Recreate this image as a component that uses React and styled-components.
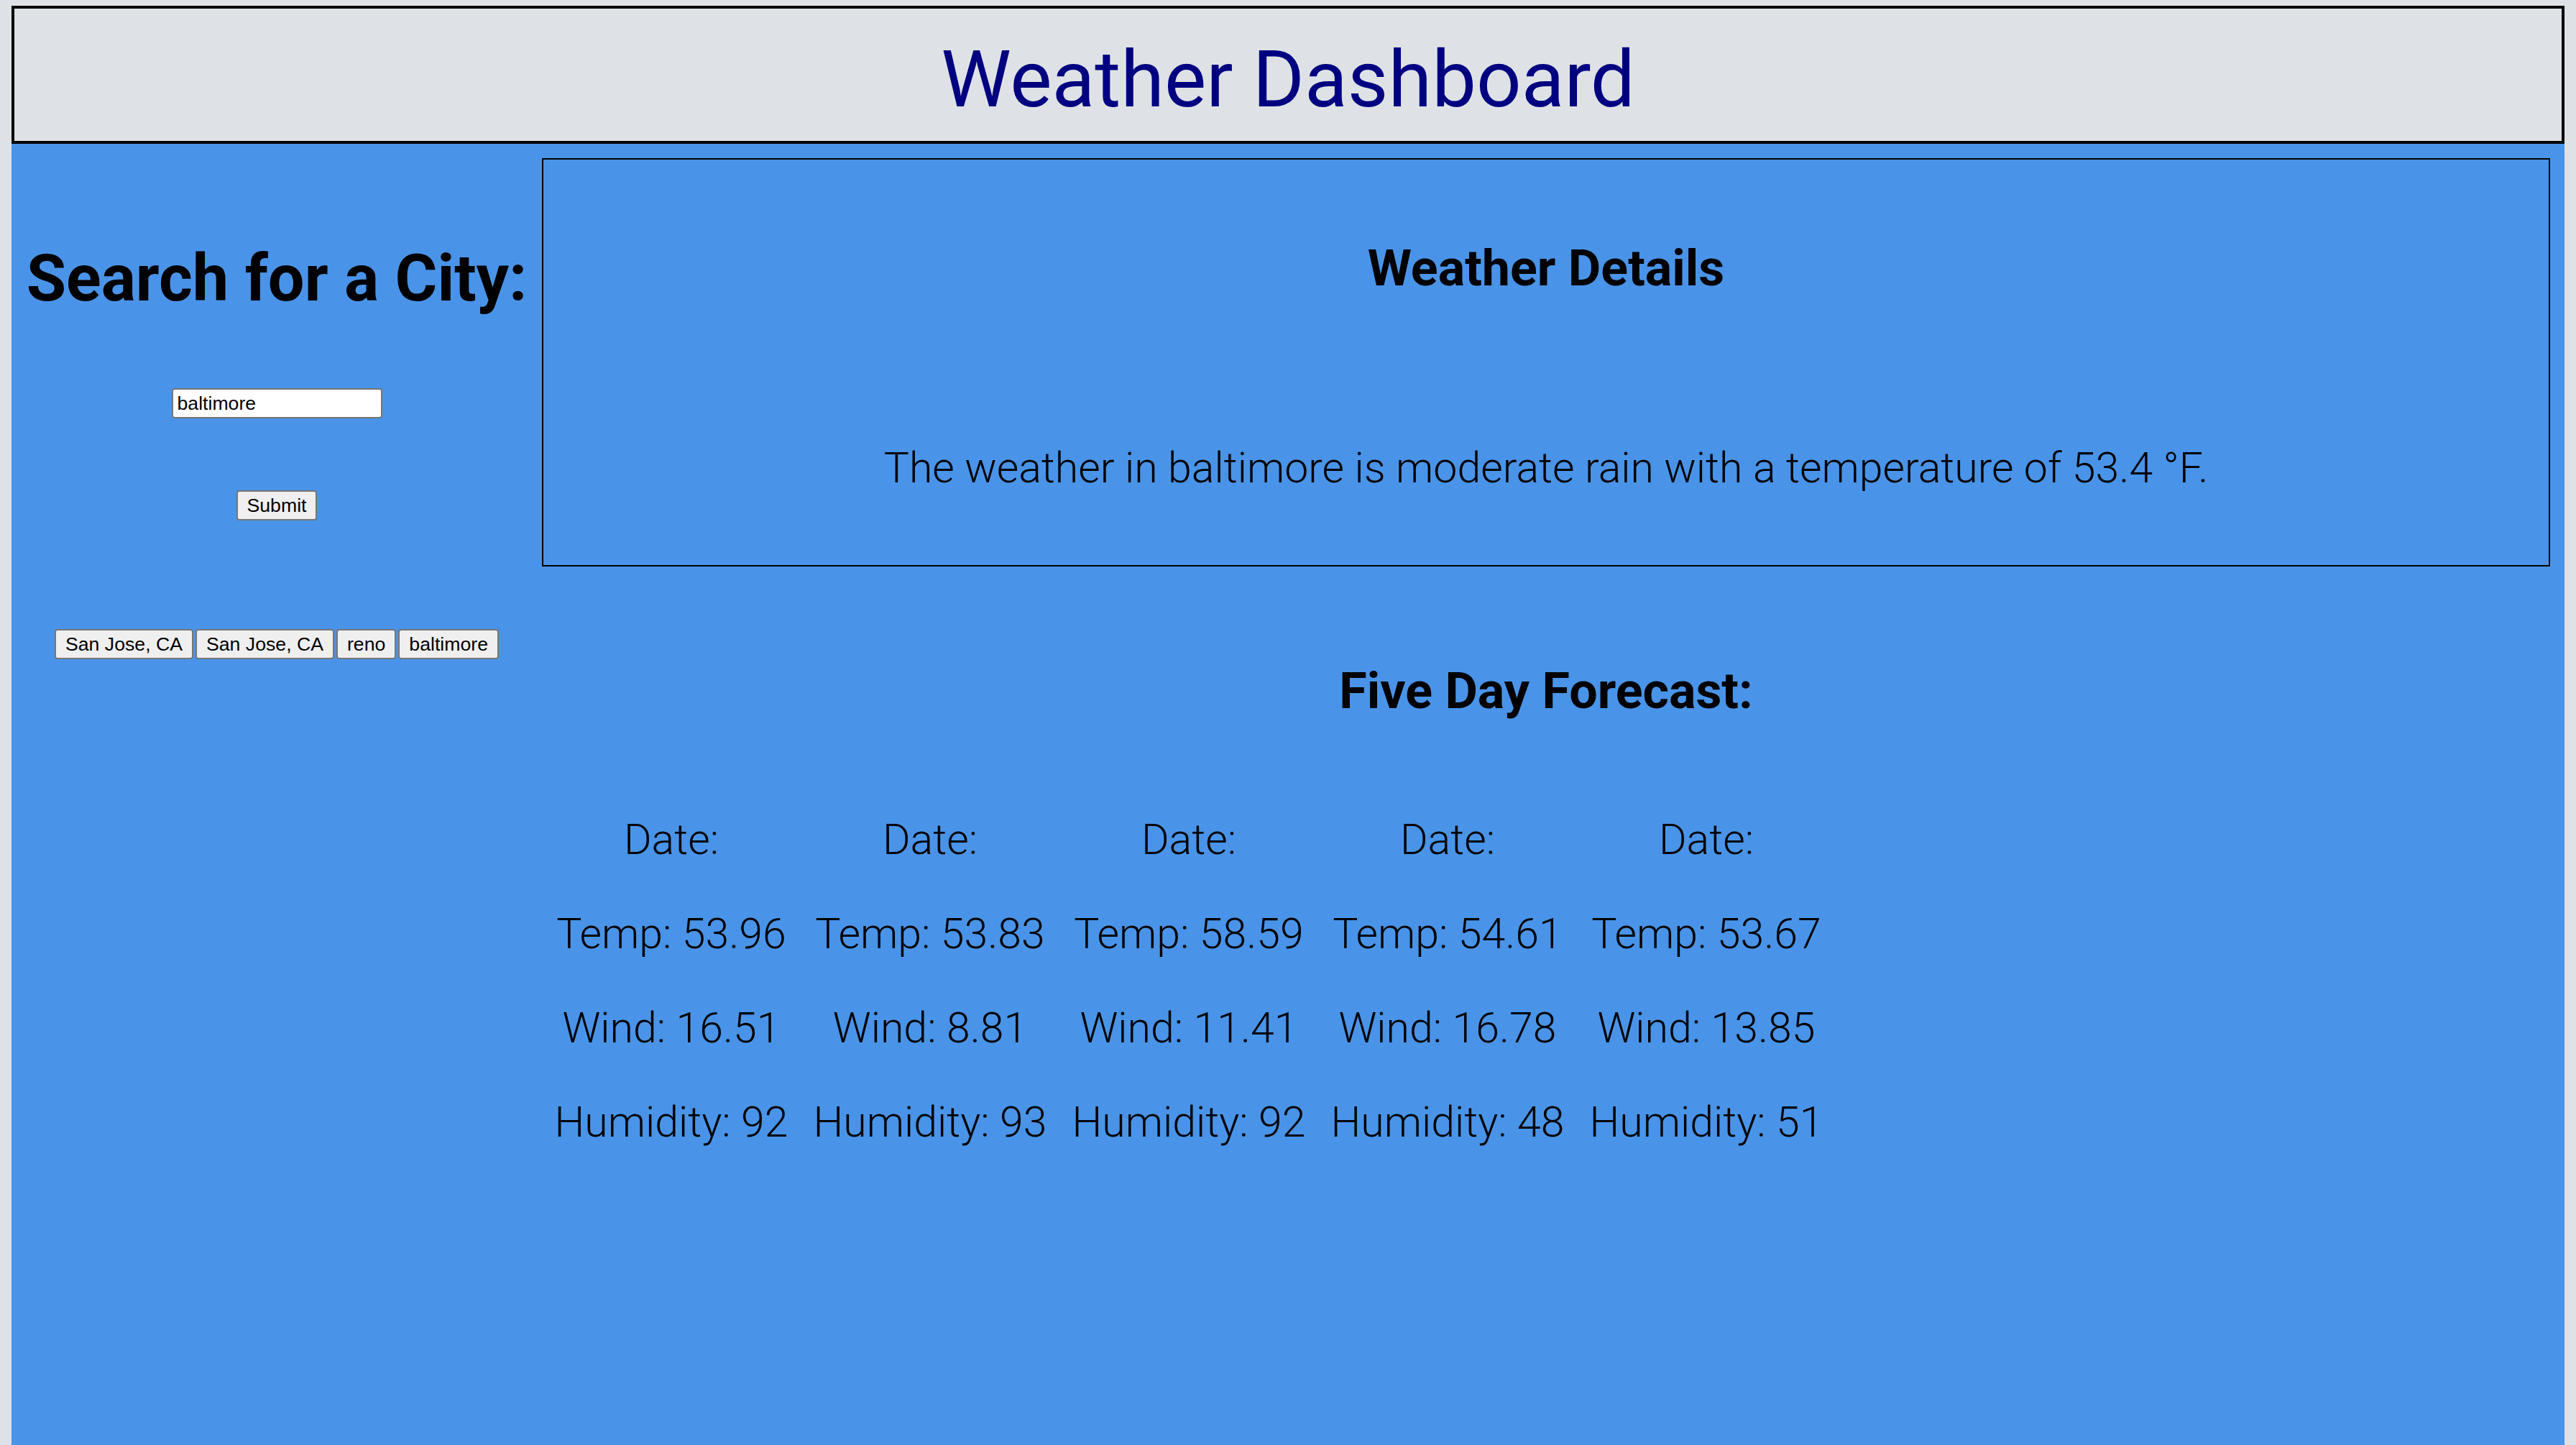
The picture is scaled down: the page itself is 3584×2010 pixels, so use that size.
import styled, { createGlobalStyle } from 'styled-components'

const GlobalStyle = createGlobalStyle`
  html, body {
    margin: 0;
    padding: 0;
  }
  body {
    background-color: #dee2e6;
    padding: 8px 16px 0;
    font-family: 'Roboto', 'Liberation Sans', sans-serif;
  }
`

const history = ['San Jose, CA', 'San Jose, CA', 'reno', 'baltimore']

const forecast = [
  { temp: '53.96', wind: '16.51', humidity: 92 },
  { temp: '53.83', wind: '8.81', humidity: 93 },
  { temp: '58.59', wind: '11.41', humidity: 92 },
  { temp: '54.61', wind: '16.78', humidity: 48 },
  { temp: '53.67', wind: '13.85', humidity: 51 },
]

export default function App() {
  return (
    <>
      <GlobalStyle />
      <Header>
        <Title>Weather Dashboard</Title>
      </Header>

      <Main>
        <Aside>
          <SearchTitle>Search for a City:</SearchTitle>
          <CityInput defaultValue="baltimore" />
          <SubmitButton>Submit</SubmitButton>
          <History>
            {history.map((city, i) => (
              <FormButton key={i}>{city}</FormButton>
            ))}
          </History>
        </Aside>

        <Content>
          <DetailsBox>
            <SectionTitle>Weather Details</SectionTitle>
            <Description>
              The weather in baltimore is moderate rain with a temperature of 53.4 °F.
            </Description>
          </DetailsBox>

          <SectionTitle top={132}>Five Day Forecast:</SectionTitle>

          <Cards>
            {forecast.map((day, i) => (
              <Card key={i}>
                <Line>Date:</Line>
                <Line>Temp: {day.temp}</Line>
                <Line>Wind: {day.wind}</Line>
                <Line>Humidity: {day.humidity}</Line>
              </Card>
            ))}
          </Cards>
        </Content>
      </Main>
    </>
  )
}

const Header = styled.header`
  box-sizing: border-box;
  height: 192px;
  padding-top: 12px;
  border: 4px solid #000;
  display: flex;
  align-items: center;
  justify-content: center;
`

const Title = styled.h1`
  margin: 0;
  font-size: 110px;
  font-weight: 400;
  color: #000080;
`

const Main = styled.main`
  display: flex;
  align-items: flex-start;
  min-height: 1810px;
  background-color: #4994e8;
`

const Aside = styled.aside`
  width: 738px;
  flex-shrink: 0;
  display: flex;
  flex-direction: column;
  align-items: center;
`

const SearchTitle = styled.h2`
  margin: 135px 0 0;
  font-size: 90px;
  font-weight: 700;
  color: #000;
`

const formControl = `
  box-sizing: border-box;
  height: 42px;
  font-family: 'Liberation Sans', Arial, sans-serif;
  font-size: 26.67px;
  color: #000;
  border: 2px solid #767676;
  border-radius: 4px;
`

const CityInput = styled.input`
  ${formControl}
  width: 293px;
  margin-top: 100px;
  padding: 0 6px;
  background: #fff;
  outline: none;
`

const FormButton = styled.button`
  ${formControl}
  padding: 0 13px;
  background: #efefef;
`

const SubmitButton = styled(FormButton)`
  margin-top: 100px;
`

const History = styled.div`
  display: flex;
  gap: 3px;
  margin-top: 151px;
`

const Content = styled.section`
  flex: 1;
  padding: 20px 20px 0 0;
  text-align: center;
`

const DetailsBox = styled.div`
  border: 2px solid #000;
  padding: 110px 0 101px;
`

const SectionTitle = styled.h2`
  margin: ${({ top }) => top || 0}px 0 0;
  font-size: 70px;
  font-weight: 700;
  color: #000;
`

const thinText = `
  font-family: 'Roboto Light', 'Roboto', 'Liberation Sans', sans-serif;
  font-weight: 300;
  color: #000;
`

const Description = styled.p`
  ${thinText}
  margin: 202px 0 0;
  font-size: 59px;
`

const Cards = styled.div`
  display: flex;
  margin-top: 131px;
`

const Card = styled.div`
  width: 360px;
  display: flex;
  flex-direction: column;
  gap: 62px;
`

const Line = styled.p`
  ${thinText}
  margin: 0;
  font-size: 59px;
  white-space: nowrap;
`
